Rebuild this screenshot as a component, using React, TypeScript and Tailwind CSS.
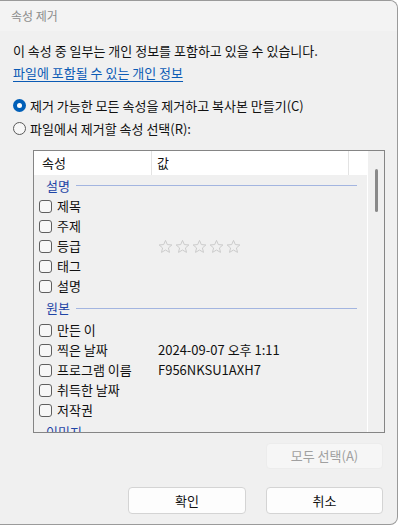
import React from "react";

const font = { fontFamily: '"Noto Sans CJK KR", "Noto Sans", sans-serif' };

function Check({ label, value }: { label: string; value?: React.ReactNode }) {
  return (
    <div className="flex h-[20px] shrink-0 items-center">
      <div className="flex w-[124px] shrink-0 items-center pl-[5px]">
        <span className="h-[13px] w-[13px] shrink-0 rounded-[3px] border border-[#5f5f5f] bg-[#f7f7f7]" />
        <span className="ml-[5px] whitespace-nowrap text-[13px] text-[#111]">{label}</span>
      </div>
      {value !== undefined && <div className="whitespace-nowrap text-[13px] text-[#111]">{value}</div>}
    </div>
  );
}

function Group({ label, h }: { label: string; h: string }) {
  return (
    <div className={`flex ${h} shrink-0 items-center pl-[12px] pr-[10px]`}>
      <span className="text-[13px] text-[#1f45a6]">{label}</span>
      <span className="ml-[6px] h-px flex-1 bg-[#a3b5e0]" />
    </div>
  );
}

function Star() {
  return (
    <svg width="15" height="15" viewBox="0 0 24 24" className="shrink-0">
      <path
        d="M12 2.2l2.9 6.7 7.3.6-5.5 4.8 1.7 7.1L12 17.6l-6.4 3.8 1.7-7.1-5.5-4.8 7.3-.6z"
        fill="none"
        stroke="#c9c9c9"
        strokeWidth="1.5"
        strokeLinejoin="round"
      />
    </svg>
  );
}

function Stars() {
  return (
    <div className="flex gap-[2px] pt-[1px]">
      <Star />
      <Star />
      <Star />
      <Star />
      <Star />
    </div>
  );
}

export default function App() {
  return (
    <div style={font} className="h-[525px] w-[398px] overflow-hidden bg-white">
      <div className="flex h-[525px] w-[398px] flex-col rounded-r-[8px] border-b border-r border-t border-[#9a9a9a] bg-[#f0f0f0]">
        {/* title bar */}
        <div className="flex h-[30px] shrink-0 items-center rounded-tr-[8px] bg-[#f3f3f3] pl-[11px]">
          <span className="text-[12px] text-[#8c8c8c]">속성 제거</span>
        </div>
        <div className="flex flex-1 flex-col px-[13px]">
          <div className="mt-[10px] whitespace-nowrap text-[13px] leading-[20px] text-[#111]">
            이 속성 중 일부는 개인 정보를 포함하고 있을 수 있습니다.
          </div>
          <div className="mt-[2px] text-[13px] leading-[20px] text-[#0b5bb5] underline underline-offset-[3px]">
            파일에 포함될 수 있는 개인 정보
          </div>
          <div className="mt-[11px] flex h-[23px] items-center">
            <span className="flex h-[13px] w-[13px] items-center justify-center rounded-full bg-[#005fb8]">
              <span className="h-[5px] w-[5px] rounded-full bg-white" />
            </span>
            <span className="ml-[4px] whitespace-nowrap text-[13px] text-[#111]">
              제거 가능한 모든 속성을 제거하고 복사본 만들기(C)
            </span>
          </div>
          <div className="flex h-[23px] items-center">
            <span className="h-[13px] w-[13px] rounded-full border border-[#5a5a5a] bg-[#f7f7f7]" />
            <span className="ml-[4px] text-[13px] text-[#111]">파일에서 제거할 속성 선택(R):</span>
          </div>

          {/* list box */}
          <div className="ml-[20px] mt-[10px] flex h-[283px] w-[352px] border border-[#858585]">
            <div className="flex flex-1 flex-col overflow-hidden">
              <div className="flex h-[24px] shrink-0 bg-white text-[13px] text-[#111]">
                <div className="flex w-[118px] items-center border-r border-[#e3e3e3] pl-[8px]">속성</div>
                <div className="flex w-[197px] items-center border-r border-[#e3e3e3] pl-[5px]">값</div>
                <div className="flex-1" />
              </div>
              <Group label="설명" h="h-[21px]" />
              <Check label="제목" />
              <Check label="주제" />
              <Check label="등급" value={<Stars />} />
              <Check label="태그" />
              <Check label="설명" />
              <Group label="원본" h="h-[24px]" />
              <Check label="만든 이" />
              <Check label="찍은 날짜" value="2024-09-07 오후 1:11" />
              <Check label="프로그램 이름" value="F956NKSU1AXH7" />
              <Check label="취득한 날짜" />
              <Check label="저작권" />
              <Group label="이미지" h="h-[24px]" />
            </div>
            <div className="w-[17px] shrink-0 border-l border-white bg-[#f0f0f0] pt-[18px]">
              <div className="ml-[7px] h-[43px] w-[3px] rounded-full bg-[#8a8a8a]" />
            </div>
          </div>

          <div className="mt-[10px] flex justify-end pr-[1px]">
            <div className="flex h-[26px] w-[117px] items-center justify-center rounded-[4px] border border-[#ececec] bg-[#f6f6f6] text-[13px] text-[#a0a0a0]">
              모두 선택(A)
            </div>
          </div>

          <div className="mt-[18px] flex justify-end gap-[20px] pr-[1px]">
            <div className="flex h-[27px] w-[118px] items-center justify-center rounded-[4px] border border-[#d4d4d4] bg-[#fdfdfd] text-[13px] text-[#111]">
              확인
            </div>
            <div className="flex h-[27px] w-[117px] items-center justify-center rounded-[4px] border border-[#d4d4d4] bg-[#fdfdfd] text-[13px] text-[#111]">
              취소
            </div>
          </div>
        </div>
      </div>
    </div>
  );
}
